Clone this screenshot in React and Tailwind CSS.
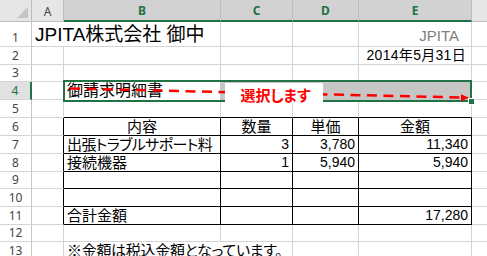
import React from "react";

const RIGHT = {
  grid: "border-r border-r-[#d4d4d4]",
  black: "border-r border-r-black",
  none: "",
};
const BOTTOM = {
  grid: "border-b border-b-[#d4d4d4]",
  black: "border-b border-b-black",
  none: "",
};

function Cell({ w, r = "grid", b = "grid", align = "left", className = "", children }) {
  const justify =
    align === "right"
      ? "justify-end pr-[3px]"
      : align === "center"
      ? "justify-center"
      : "justify-start pl-[3px]";
  return (
    <div
      className={`${w} shrink-0 flex items-end ${justify} ${RIGHT[r]} ${BOTTOM[b]} whitespace-nowrap overflow-hidden leading-[17px] ${className}`}
    >
      {children}
    </div>
  );
}

function RowHead({ n, active }) {
  if (active) {
    return (
      <div className="w-[32px] shrink-0 flex items-end justify-center bg-[#e1e1e1] text-[#217346] border-r-2 border-r-[#217346] border-b border-b-[#d4d4d4] font-['Noto_Sans',sans-serif] text-[12px] leading-[17px]">
        {n}
      </div>
    );
  }
  return (
    <div className="w-[32px] shrink-0 flex items-end justify-center text-[#444] border-r border-r-[#c6c6c6] border-b border-b-[#d4d4d4] font-['Noto_Sans',sans-serif] text-[12px] leading-[17px]">
      {n}
    </div>
  );
}

function Row({ n, h, active, children }) {
  return (
    <div className={`flex ${h}`}>
      <RowHead n={n} active={active} />
      {children}
    </div>
  );
}

// plain row with gridlines only
function Blank({ n, h }) {
  return (
    <Row n={n} h={h}>
      <Cell w="w-[32px]" />
      <Cell w="w-[157px]" />
      <Cell w="w-[72px]" />
      <Cell w="w-[66px]" />
      <Cell w="w-[113px]" />
      <Cell w="flex-1" r="none" />
    </Row>
  );
}

function TableRow({ n, h, item, qty, price, amount, head, tight }) {
  const num = "text-[14px] font-['Liberation_Sans',sans-serif]";
  return (
    <Row n={n} h={h}>
      <Cell w="w-[32px]" r="black" />
      <Cell
        w="w-[157px]"
        r="black"
        b="black"
        align={head ? "center" : "left"}
        className={tight ? "tracking-[-0.6px]" : ""}
      >
        {item}
      </Cell>
      <Cell w="w-[72px]" r="black" b="black" align={head ? "center" : "right"} className={head ? "" : num}>
        {qty}
      </Cell>
      <Cell w="w-[66px]" r="black" b="black" align={head ? "center" : "right"} className={head ? "" : num}>
        {price}
      </Cell>
      <Cell w="w-[113px]" r="black" b="black" align={head ? "center" : "right"} className={head ? "" : num}>
        {amount}
      </Cell>
      <Cell w="flex-1" r="none" />
    </Row>
  );
}

function ColHead({ w, label, selected, last }) {
  if (selected) {
    return (
      <div className={`${w} shrink-0 flex items-center justify-center pt-[1px] bg-[#d2d2d2] text-[#217346] font-bold border-r border-r-[#bdbdbd] border-b-2 border-b-[#217346]`}>
        {label}
      </div>
    );
  }
  return (
    <div className={`${w} shrink-0 flex items-center justify-center pt-[2px] bg-[#e6e6e6] text-[#444] border-b border-b-[#bdbdbd] ${last ? "" : "border-r border-r-[#bdbdbd]"}`}>
      {label}
    </div>
  );
}

export default function App() {
  return (
    <div className="relative w-[487px] h-[256px] overflow-hidden bg-white text-black text-[15px] font-['Liberation_Sans','Noto_Sans_CJK_JP',sans-serif] [font-feature-settings:'palt']">
      {/* column headers */}
      <div className="flex h-[22px] text-[12px] font-['Noto_Sans',sans-serif]">
        <div className="w-[32px] shrink-0 flex items-end justify-end pr-[3px] pb-[3px] bg-[#e6e6e6] border-r border-r-[#bdbdbd] border-b border-b-[#bdbdbd]">
          <svg width="11" height="11" viewBox="0 0 11 11">
            <polygon points="11,0 11,11 0,11" fill="#c4c4c4" />
          </svg>
        </div>
        <ColHead w="w-[32px]" label="A" />
        <ColHead w="w-[157px]" label="B" selected />
        <ColHead w="w-[72px]" label="C" selected />
        <ColHead w="w-[66px]" label="D" selected />
        <ColHead w="w-[113px]" label="E" selected />
        <ColHead w="flex-1" label="" last />
      </div>

      <Row n="1" h="h-[25px]">
        <Cell w="w-[189px]" className="text-[19px] leading-[22px]">
          JPITA株式会社 御中
        </Cell>
        <Cell w="w-[72px]" />
        <Cell w="w-[66px]" />
        <Cell w="w-[113px]" align="right" className="!pr-[12px] text-[15px] leading-[21px] text-[#808080]">
          JPITA
        </Cell>
        <Cell w="flex-1" r="none" />
      </Row>

      <Row n="2" h="h-[18px]">
        <Cell w="w-[32px]" />
        <Cell w="w-[157px]" />
        <Cell w="w-[72px]" />
        <Cell w="w-[66px]" />
        <Cell w="w-[113px]" align="right" className="text-[14px] !pr-[5px] tracking-[0.3px]">
          2014年5月31日
        </Cell>
        <Cell w="flex-1" r="none" />
      </Row>

      <Blank n="3" h="h-[17px]" />

      <Row n="4" h="h-[18px]" active>
        <Cell w="w-[32px]" />
        <Cell w="w-[156px]" r="none" b="none" className="text-[16px] leading-[18px]">
          御請求明細書
        </Cell>
        <div className="w-[252px] shrink-0 bg-[#c6c6c6]" />
        <Cell w="flex-1" r="none" />
      </Row>

      <Row n="5" h="h-[18px]">
        <Cell w="w-[32px]" />
        <Cell w="w-[157px]" b="black" />
        <Cell w="w-[72px]" b="black" />
        <Cell w="w-[66px]" b="black" />
        <Cell w="w-[113px]" b="black" />
        <Cell w="flex-1" r="none" />
      </Row>

      <TableRow n="6" h="h-[18px]" head item="内容" qty="数量" price="単価" amount="金額" />
      <TableRow n="7" h="h-[18px]" tight item="出張トラブルサポート料" qty="3" price="3,780" amount="11,340" />
      <TableRow n="8" h="h-[18px]" item="接続機器" qty="1" price="5,940" amount="5,940" />
      <TableRow n="9" h="h-[17px]" />
      <TableRow n="10" h="h-[18px]" />
      <TableRow n="11" h="h-[18px]" item="合計金額" amount="17,280" />

      <Blank n="12" h="h-[17px]" />

      <Row n="13" h="h-[18px]">
        <Cell w="w-[32px]" />
        <Cell w="w-[229px]" className="tracking-[-0.3px]">※金額は税込金額となっています。</Cell>
        <Cell w="w-[66px]" />
        <Cell w="w-[113px]" />
        <Cell w="flex-1" r="none" />
      </Row>

      {/* selection box B4:E4 */}
      <div className="absolute left-[63px] top-[80px] w-[409px] h-[22px] border-2 border-[#217346]" />
      <div className="absolute left-[468px] top-[98px] w-[7px] h-[7px] bg-[#217346] border border-white" />

      {/* red dashed arrow */}
      <svg className="absolute left-0 top-0" width="487" height="256">
        <line x1="70" y1="88.5" x2="462" y2="97.5" stroke="#ff0000" strokeWidth="2.5" strokeDasharray="10 6.5" />
        <polygon points="469,97.8 461,94.3 461,101.3" fill="#ff0000" />
      </svg>

      <div className="absolute left-[225px] top-[83px] w-[98px] h-[21px] bg-white flex items-end justify-center pl-[3px] text-[15px] leading-[16px] font-bold text-[#ff0000]">
        選択します
      </div>
    </div>
  );
}
